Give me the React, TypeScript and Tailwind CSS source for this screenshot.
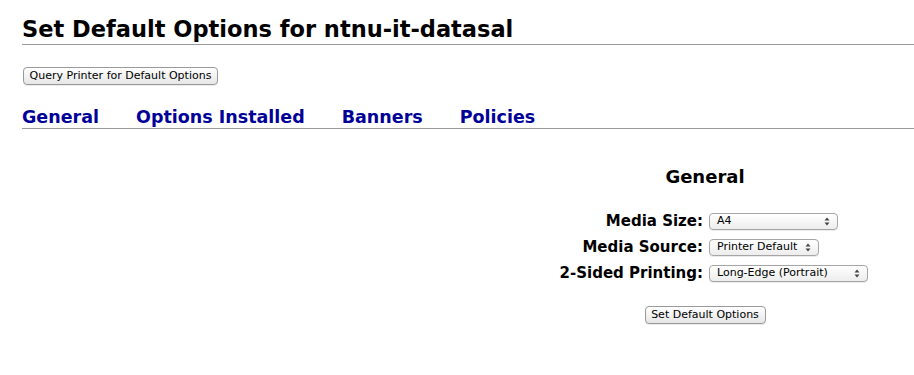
import React from "react";

const font = { fontFamily: '"DejaVu Sans", "Lucida Grande", Verdana, sans-serif' };

function Arrows() {
    return (
        <svg width="6" height="9" viewBox="0 0 6 9" className="shrink-0">
            <path d="M3 0.5 L5.5 3.5 L0.5 3.5 Z" fill="#444" />
            <path d="M3 8.5 L5.5 5.5 L0.5 5.5 Z" fill="#444" />
        </svg>
    )
}

function FakeSelect({ value, width }: { value: string, width: string }) {
    return (
        <div
            className={`${width} h-[17px] flex items-center justify-between pl-[7px] pr-[7px] border border-[#a6a6a6] rounded-[4px] bg-gradient-to-b from-white to-[#ededed] text-[11px] text-black shadow-[0_1px_0_rgba(0,0,0,0.08)]`}
        >
            <span>{value}</span>
            <Arrows />
        </div>
    )
}

function MacButton({ label, width }: { label: string, width: string }) {
    return (
        <button
            className={`${width} h-[18px] flex items-center justify-center border border-[#9a9a9a] rounded-[4px] bg-gradient-to-b from-white to-[#e6e6e6] text-[11px] text-black shadow-[0_1px_0_rgba(0,0,0,0.08)]`}
        >
            {label}
        </button>
    )
}

export default function App() {
    const rows = [
        { label: "Media Size:", value: "A4", width: "w-[129px]" },
        { label: "Media Source:", value: "Printer Default", width: "w-[110px]" },
        { label: "2-Sided Printing:", value: "Long-Edge (Portrait)", width: "w-[159px]" },
    ]

    return (
        <div className="w-[914px] h-[375px] bg-white overflow-hidden pl-[22px]" style={font}>
            <h1 className="pt-[15px] text-[22.5px] leading-[28px] font-bold text-black border-b border-[#9b9b9b] pb-[1px]">
                Set Default Options for ntnu-it-datasal
            </h1>

            <div className="pt-[22px] pl-[1px]">
                <MacButton label="Query Printer for Default Options" width="w-[195px]" />
            </div>

            <div className="mt-[21px] flex gap-[37px] border-b border-[#9b9b9b] text-[17.5px] leading-[22px] font-bold text-[#000099]">
                <span>General</span>
                <span>Options Installed</span>
                <span>Banners</span>
                <span>Policies</span>
            </div>

            <div className="ml-[474px] flex flex-col items-center">
                <h2 className="mt-[37px] text-[18px] leading-[22px] font-bold text-black">General</h2>

                <div className="mt-[24px] self-start flex flex-col gap-[8px]">
                    {rows.map((row) => (
                        <div key={row.label} className="flex items-center gap-[6px]">
                            <div className="w-[207px] text-right text-[15px] leading-[18px] font-bold text-black">
                                {row.label}
                            </div>
                            <FakeSelect value={row.value} width={row.width} />
                        </div>
                    ))}
                </div>

                <div className="mt-[24px]">
                    <MacButton label="Set Default Options" width="w-[121px]" />
                </div>
            </div>
        </div>
    )
}
